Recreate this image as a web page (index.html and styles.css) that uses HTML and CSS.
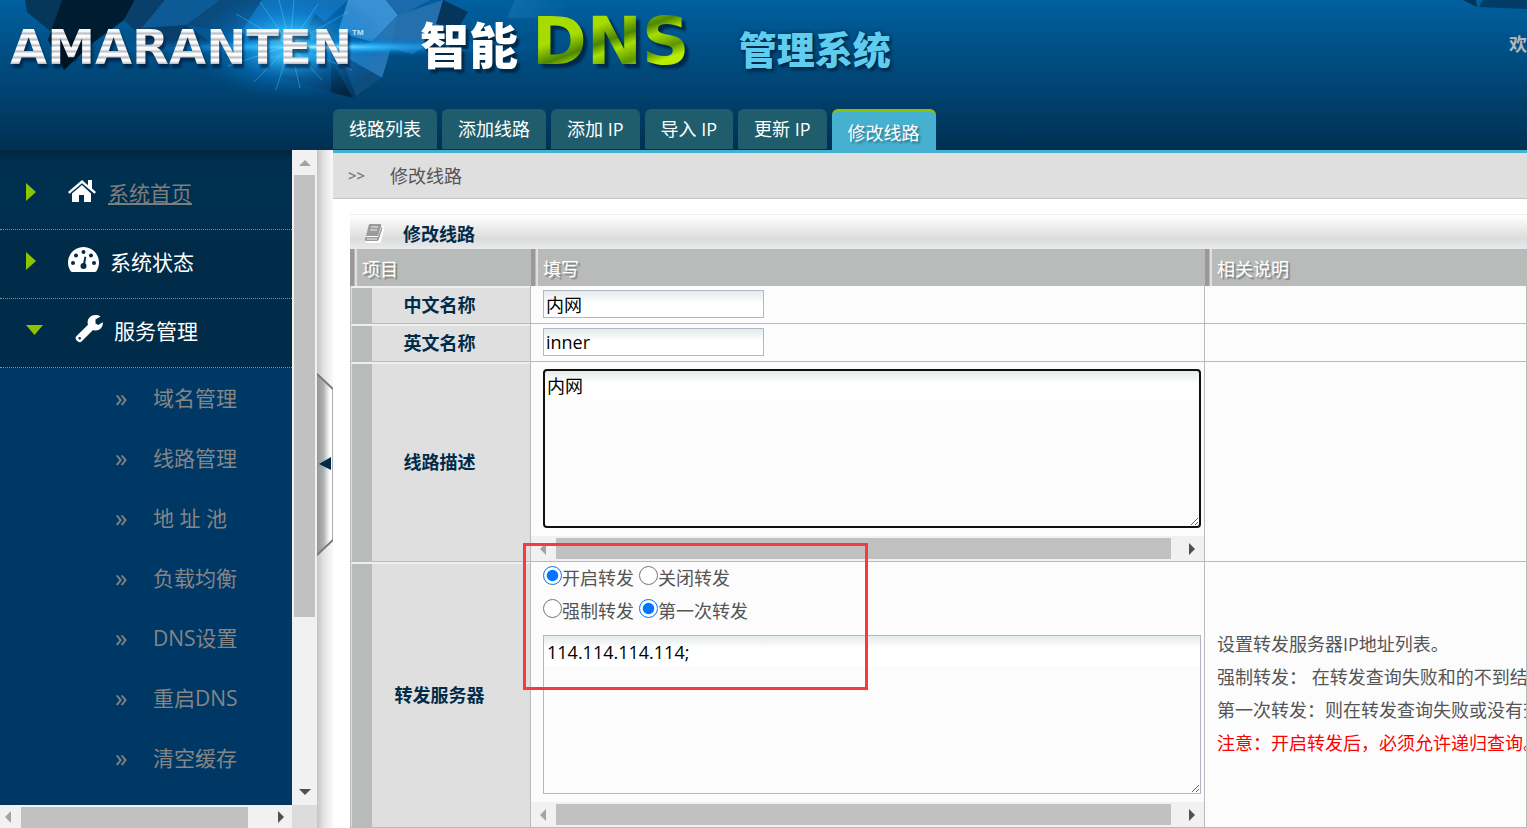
FILE: index.html
```
<!DOCTYPE html>
<html lang="zh-CN">
<head>
    <meta charset="UTF-8">
    <meta name="viewport" content="width=device-width, initial-scale=1.0">
    <title>智能DNS管理系统</title>
    <link rel="stylesheet" href="styles.css">
</head>
<body>
    <header>
        <svg class="crystal" width="580" height="100" viewBox="0 0 580 100" aria-hidden="true">
            <defs>
                <radialGradient id="glow">
                    <stop offset="0" stop-color="#b5f2ff"/>
                    <stop offset="0.25" stop-color="#2fbcfb" stop-opacity="0.9"/>
                    <stop offset="0.6" stop-color="#0a86e0" stop-opacity="0.4"/>
                    <stop offset="1" stop-color="#0060b0" stop-opacity="0"/>
                </radialGradient>
                <linearGradient id="fade" x1="0" x2="1" y1="0" y2="0">
                    <stop offset="0" stop-color="#2f8fd4"/>
                    <stop offset="1" stop-color="#2f8fd4" stop-opacity="0"/>
                </linearGradient>
            </defs>
            <polygon points="25,0 70,0 55,35 27,12" fill="#06365a"/>
            <polygon points="62,0 135,0 124,20 90,45 64,70 48,40" fill="#001c30"/>
            <polygon points="55,35 90,45 64,70" fill="#00131f"/>
            <polygon points="135,0 165,0 142,28 150,45 124,20" fill="#0a3f69"/>
            <polygon points="165,0 220,0 186,25 142,28" fill="#0d5b96"/>
            <polygon points="142,28 186,25 215,45 150,48" fill="#083e69"/>
            <polygon points="220,0 262,0 240,34 186,25" fill="#0a4a7c"/>
            <polygon points="262,0 348,0 315,30 290,45 240,34" fill="#1272b8"/>
            <polygon points="315,14 338,32 322,50 302,36" fill="#0b4672"/>
            <polygon points="348,0 386,0 398,15 372,42 338,32" fill="#3990d2"/>
            <polygon points="386,0 430,0 400,16" fill="#1a6bad"/>
            <polygon points="398,15 443,0 436,38 413,54 388,48" fill="#2470ae"/>
            <polygon points="398,15 388,58 382,78 340,54 372,42" fill="#2676b6"/>
            <polygon points="338,58 382,78 353,98 331,92 280,77 292,66" fill="#073a63"/>
            <polygon points="331,60 353,98 331,92" fill="#022743"/>
            <polygon points="340,54 382,78 356,96" fill="#0e4d7e"/>
            <polygon points="443,0 468,12 458,28 436,24" fill="#06345b"/>
            <polygon points="515,0 565,0 571,18 507,18" fill="url(#fade)" opacity="0.3"/>
            <ellipse cx="290" cy="45" rx="100" ry="56" fill="url(#glow)"/>
            <ellipse cx="320" cy="47" rx="230" ry="10" fill="url(#glow)"/>
            <g stroke="#8fe6ff" stroke-width="1" opacity="0.3">
                <path d="M290 45 279 0M290 45 294 0M290 45 260 2M290 45 318 4M290 45 236 14M290 45 348 12M290 45 276 90M290 45 300 88M290 45 254 82M290 45 322 80M290 45 228 66M290 45 352 70"/>
            </g>
        </svg>
        <div class="banner">
            <h1 class="brand">
                <span class="logo">AMARANTEN</span><sup class="tm">TM</sup>
                <span class="smart">智能</span>
                <span class="dns">DNS</span>
                <span class="system">管理系统</span>
            </h1>
            <svg class="shard" width="64" height="10" viewBox="0 0 64 10" aria-hidden="true">
                <path d="M0 0h13l1 7z" fill="#00335a"/>
                <path d="M20 0h44v9L16 7z" fill="#003c66"/>
            </svg>
            <strong class="welcome">欢</strong>
        </div>
        <nav class="tabs">
            <a href="#">线路列表</a>
            <a href="#">添加线路</a>
            <a href="#">添加 IP</a>
            <a href="#">导入 IP</a>
            <a href="#">更新 IP</a>
            <a href="#" class="active">修改线路</a>
        </nav>
    </header>
    <div class="page">
        <aside>
            <div class="side-view">
                <nav class="menu">
                    <a href="#" class="menu-item current">
                        <svg width="10" height="18" viewBox="0 0 10 18"><path d="M0 0l10 9-10 9z" fill="#8fc400"/></svg>
                        <svg class="icon home" width="28" height="24" viewBox="0 0 28 24"><path d="M14 6 4 14.500V23h7v-7h5v7h7v-8.500z"/><path d="M14 1 0 13l1.500 1.700L14 4.200l12.500 10.500L28 13l-4-3.500V1h-4v5.200z"/></svg>
                        <span>系统首页</span>
                    </a>
                    <a href="#" class="menu-item">
                        <svg width="10" height="18" viewBox="0 0 10 18"><path d="M0 0l10 9-10 9z" fill="#8fc400"/></svg>
                        <svg class="icon" width="31" height="26" viewBox="0 0 31 26">
                            <path d="M15.500 0C7 0 0 7 0 15.500c0 3 .8 5.800 2.300 8.300.4.700 1 1.200 1.700 1.200h23c.7 0 1.300-.5 1.700-1.200 1.500-2.500 2.300-5.300 2.300-8.300C31 7 24 0 15.500 0z"/>
                            <g fill="#002c4a"><circle cx="5" cy="16" r="2"/><circle cx="8" cy="8.500" r="2"/><circle cx="15.500" cy="5" r="2"/><circle cx="23" cy="8.500" r="2"/><circle cx="26" cy="16" r="2"/><circle cx="15.500" cy="19" r="3"/><path d="M16.500 9.500l1.700.5-1.200 8h-2.200z"/></g>
                        </svg>
                        <span>系统状态</span>
                    </a>
                    <a href="#" class="menu-item">
                        <svg width="17" height="10" viewBox="0 0 17 10"><path d="M0 0h17L8.500 10z" fill="#8fc400"/></svg>
                        <svg class="icon" width="28" height="28" viewBox="0 0 28 28"><path fill-rule="evenodd" d="M25.500 1.500 20.500 4.400v4l2.800 1.600 4.500-2.700c.6 4.500-3 8.200-7 8.200-1.100 0-2-.2-2.800-.6L6.500 26.500c-1 1-2.600 1-3.600 0l-1.600-1.600c-1-1-1-2.600 0-3.600L13 9.800c-.3-.8-.4-1.600-.4-2.400C12.600 3.400 16 0 20.300 0c1.900 0 3.700.4 5.200 1.500zM4.700 22a1.300 1.300 0 1 0 0 2.600 1.300 1.300 0 0 0 0-2.600z"/></svg>
                        <span>服务管理</span>
                    </a>
                </nav>
                <ul class="submenu">
                    <li><a href="#">域名管理</a></li>
                    <li><a href="#">线路管理</a></li>
                    <li><a href="#">地 址 池</a></li>
                    <li><a href="#">负载均衡</a></li>
                    <li><a href="#">DNS设置</a></li>
                    <li><a href="#">重启DNS</a></li>
                    <li><a href="#">清空缓存</a></li>
                </ul>
            </div>
            <div class="vbar"><i class="up"></i><b></b><i class="down"></i></div>
            <div class="hbar"><i class="left"></i><b></b><i class="right"></i></div>
            <div class="corner"></div>
        </aside>
        <div class="splitter">
            <button type="button" aria-label="收起菜单">
                <svg width="16" height="184" viewBox="0 0 16 184">
                    <defs>
                        <linearGradient id="grip" x1="0" x2="1" y1="0" y2="0">
                            <stop offset="0" stop-color="#94989a"/>
                            <stop offset="0.4" stop-color="#aeb0b1"/>
                            <stop offset="0.8" stop-color="#fff"/>
                        </linearGradient>
                    </defs>
                    <path d="M0 0l16 15v152L0 183z" fill="url(#grip)"/>
                    <path d="M15.500 15v152" stroke="#b0b0b0"/>
                    <path d="M0 1l16 15M0 182l16-15" stroke="#777" stroke-width="2"/>
                    <path d="M14 84v13L2 91z" fill="#002c4a"/>
                </svg>
            </button>
        </div>
        <main>
            <div class="crumb"><span>&gt;&gt;</span>修改线路</div>
            <form>
                <h2>
                    <svg width="20" height="20" viewBox="0 0 20 20"><path d="M6 1h12c1 0 2 1 1.500 2.500L16 16c-.3 1.500-1 2-2 2H2c-1.500 0-2-1.500-1.500-3z" fill="#fff" transform="translate(1 2)"/><path d="M6 1h10c1 0 1.500.8 1.200 2L14 13H2L4.500 3C4.800 1.800 5 1 6 1zM1.500 14H14l3.500-10 1 1-3.500 11c-.3 1.200-1 2-2 2H2c-1.500 0-1.500-2-.5-4z" fill="#9b9b9b"/><path d="M7 4h7M6 7h7M3 16h10" stroke="#eee"/></svg>
                    修改线路
                </h2>
                <table>
                    <colgroup>
                        <col class="col-name">
                        <col class="col-value">
                        <col>
                    </colgroup>
                    <thead>
                        <tr>
                            <th>项目</th>
                            <th>填写</th>
                            <th>相关说明</th>
                        </tr>
                    </thead>
                    <tbody>
                        <tr>
                            <th><label for="nameCn">中文名称</label></th>
                            <td><input type="text" id="nameCn" value="内网"></td>
                            <td></td>
                        </tr>
                        <tr>
                            <th><label for="nameEn">英文名称</label></th>
                            <td><input type="text" id="nameEn" value="inner"></td>
                            <td></td>
                        </tr>
                        <tr>
                            <th><label for="desc">线路描述</label></th>
                            <td class="scroll-cell">
                                <div class="field"><textarea id="desc" class="focused">内网</textarea></div>
                                <div class="hbar"><i class="left"></i><b></b><i class="right"></i></div>
                            </td>
                            <td></td>
                        </tr>
                        <tr>
                            <th><label for="servers">转发服务器</label></th>
                            <td class="scroll-cell">
                                <div class="radios">
                                    <label><input type="radio" name="forward" checked>开启转发</label>
                                    <label><input type="radio" name="forward">关闭转发</label>
                                </div>
                                <div class="radios">
                                    <label><input type="radio" name="mode">强制转发</label>
                                    <label><input type="radio" name="mode" checked>第一次转发</label>
                                </div>
                                <div class="field"><textarea id="servers">114.114.114.114;</textarea></div>
                                <div class="hbar"><i class="left"></i><b></b><i class="right"></i></div>
                                <div class="mark"></div>
                            </td>
                            <td class="note">
                                <p>设置转发服务器IP地址列表。</p>
                                <p>强制转发： 在转发查询失败和的不到结</p>
                                <p>第一次转发：则在转发查询失败或没有查</p>
                                <p class="warn">注意：开启转发后，必须允许递归查询。</p>
                            </td>
                        </tr>
                    </tbody>
                </table>
            </form>
        </main>
    </div>
</body>
</html>
```
FILE: styles.css
```
* {
    box-sizing: border-box;
}
body {
    font-family: "Open Sans", "Noto Sans CJK SC", sans-serif;
    font-size: 18px;
    margin: 0;
    height: 100vh;
    display: flex;
    flex-direction: column;
    overflow: hidden;
    background-color: #fff;
    color: #555;
}
a {
    color: inherit;
    text-decoration: none;
}
header {
    position: relative;
    z-index: 2;
    height: 150px;
    flex: none;
    display: flex;
    flex-direction: column;
    background: linear-gradient(#00609f, #004a7d 45%, #003052);
}
.crystal {
    position: absolute;
    top: 0;
    left: 0;
}
.banner {
    position: relative;
    height: 109px;
    flex: none;
    display: flex;
    align-items: flex-start;
}
.brand {
    display: flex;
    align-items: baseline;
    margin: 0;
    padding-left: 10px;
    line-height: 84px;
    white-space: nowrap;
}
.logo {
    font-family: "DejaVu Sans", sans-serif;
    font-size: 48px;
    font-weight: bold;
    color: transparent;
    background: repeating-linear-gradient(#fff 0, #f4f4f4 3px, #b4b8bd 4px, #e4e6e8 6px);
    -webkit-background-clip: text;
    background-clip: text;
    filter: drop-shadow(2px 4px 1px rgba(0, 20, 50, 0.6));
}
.tm {
    font-family: "Liberation Sans", sans-serif;
    font-size: 8px;
    line-height: 8px;
    align-self: flex-start;
    margin-top: 29px;
    width: 12px;
    color: #bfe4f5;
}
.smart {
    margin-left: 56px;
    font-size: 49px;
    font-weight: 900;
    color: #fff;
    text-shadow: 3px 4px 2px #00294a;
}
.dns {
    margin-left: 14px;
    font-family: "DejaVu Sans", sans-serif;
    font-size: 66px;
    font-weight: bold;
    color: transparent;
    background: linear-gradient(160deg, #a6dc00 35%, #4d8600 48%, #a8e000 56%, #5b9600 68%, #b8ec00 76%);
    -webkit-background-clip: text;
    background-clip: text;
    filter: drop-shadow(4px 4px 1px #00294a);
}
.system {
    margin-left: 49px;
    font-size: 38px;
    font-weight: 900;
    color: #5fcdf0;
    text-shadow: 0 0 4px #002a48, 2px 3px 3px #002a48;
}
.shard {
    position: absolute;
    top: 0;
    right: 0;
}
.welcome {
    margin-left: auto;
    line-height: 88px;
    color: #b8b8b8;
}
.tabs {
    position: relative;
    display: flex;
    align-items: flex-start;
    gap: 5px;
    padding-left: 333px;
}
.tabs a {
    height: 40px;
    line-height: 40px;
    padding: 0 16px;
    border-radius: 6px 6px 0 0;
    background-color: #1f5d6c;
    color: #fff;
    white-space: nowrap;
}
.tabs .active {
    height: 44px;
    line-height: 42px;
    border-top: 3px solid #8fbf00;
    background-color: #45b0cf;
    text-shadow: 2px 2px 2px rgba(0, 0, 0, 0.35);
}
.page {
    flex: 1;
    min-height: 0;
    display: flex;
}

/* left menu */
aside {
    width: 317px;
    flex: none;
    display: grid;
    grid-template-columns: 1fr 25px;
    grid-template-rows: 1fr 23px;
}
.side-view {
    overflow: hidden;
    background-color: #003865;
}
.menu {
    padding-top: 11px;
    background: linear-gradient(#002640, #003050 14px, #003050 60px, #002c4a 90px);
}
.menu-item {
    display: flex;
    align-items: center;
    height: 69px;
    padding: 0 0 6px 26px;
    border-bottom: 1px dotted #8b8f92;
    font-size: 21px;
    color: #fff;
}
.menu-item .icon {
    margin: 0 11px 2px 32px;
    fill: #fff;
}
.menu-item .home {
    margin-right: 12px;
}
.menu-item.current span {
    color: #7d7d7d;
    text-decoration: underline;
}
.submenu {
    list-style: none;
    margin: 0;
    padding: 0;
}
.submenu a {
    display: flex;
    align-items: center;
    height: 60px;
    padding: 0 0 2px 115px;
    font-size: 21px;
    color: #858585;
}
.submenu a::before {
    content: "»";
    width: 38px;
    font-size: 25px;
    line-height: 30px;
}

/* scroll bars */
.vbar, .hbar {
    display: flex;
    align-items: center;
    background-color: #f1f1f1;
}
.vbar {
    flex-direction: column;
    padding: 10px 0;
}
.vbar b {
    width: 21px;
    height: 442px;
    margin: 9px 0 auto;
    background-color: #c1c1c1;
}
.hbar {
    height: 23px;
    padding: 0 8px 0 5px;
}
.hbar b {
    width: 227px;
    height: 21px;
    margin: 2px auto 0 10px;
    background-color: #c1c1c1;
}
.vbar i, .hbar i {
    flex: none;
    border: 6px solid transparent;
}
.vbar .up {
    border-top-width: 0;
    border-bottom-color: #a3a3a3;
}
.vbar .down {
    border-bottom-width: 0;
    border-top-color: #505050;
}
.hbar .left {
    border-left-width: 0;
    border-right-color: #a3a3a3;
}
.hbar .right {
    border-right-width: 0;
    border-left-color: #505050;
}
.corner {
    background-color: #dcdcdc;
}
.splitter {
    width: 16px;
    flex: none;
    display: flex;
    align-items: flex-start;
    background: linear-gradient(90deg, #c4c4c4, #e2e2e2 40%, #fafafa);
}
.splitter button {
    margin: 223px 0 0;
    padding: 0;
    border: none;
    background: none;
    cursor: pointer;
    line-height: 0;
}

/* edit form */
main {
    flex: 1;
    min-width: 0;
    overflow: hidden;
    border-top: 3px solid #45b0cf;
}
.crumb {
    display: flex;
    align-items: center;
    height: 46px;
    padding: 0 0 2px 15px;
    background-color: #dfdfdf;
    border-bottom: 1px solid #c4c4c4;
}
.crumb span {
    width: 42px;
    font-size: 15px;
    font-weight: 600;
    color: #777;
}
form {
    padding: 15px 0 0 17px;
}
h2 {
    display: flex;
    align-items: center;
    gap: 19px;
    height: 35px;
    margin: 0;
    padding: 2px 0 0 14px;
    border-top: 1px solid #eee;
    background: linear-gradient(#fff, #dcdcdc 70%, #e9eaed);
    font-size: 18px;
    color: #002c4a;
}
table {
    width: 100%;
    table-layout: fixed;
    border-collapse: separate;
    border-spacing: 0;
}
.col-name {
    width: 181px;
}
.col-value {
    width: 674px;
}
thead th {
    height: 37px;
    padding: 0 0 0 12px;
    text-align: left;
    font-weight: normal;
    color: #fff;
    text-shadow: 2px 2px 1px #808080;
    background: linear-gradient(90deg, #999 4px, #b9bbba 4px, #b9bbba 5px, #dfdfdf 5px, #dfdfdf 7px, #b9bbba 7px);
}
tbody th {
    padding: 0 2px 2px 0;
    border: solid #b9bbba;
    border-width: 0 1px 1px;
    background: linear-gradient(90deg, #dfdfdf 1px, #b9bbba 1px, #b9bbba 21px, #dfdfdf 21px);
    box-shadow: inset 0 2px #eee;
    color: #002c4a;
}
td {
    height: 38px;
    padding: 0 3px 2px 12px;
    border: solid #b9bbba;
    border-width: 0 1px 1px 0;
    background-color: #fcfcfc;
}
input[type="text"], textarea {
    display: block;
    margin: 0;
    border: 1px solid #b3b5c8;
    background: linear-gradient(#e4eaea, #fff 12px, #fff 30px, #fcfcfc 30px);
    font-family: inherit;
    font-size: 18px;
    color: #000;
}
input[type="text"] {
    width: 221px;
    height: 28px;
    padding: 0 2px;
}
textarea {
    width: 100%;
    height: 159px;
    padding: 4px 3px;
    line-height: 25px;
}
textarea.focused {
    border: 2px solid #101010;
    border-radius: 4px;
    padding: 3px 2px;
}
td.scroll-cell {
    position: relative;
    padding: 0;
}
.field {
    padding: 7px 3px 8px 12px;
}
.scroll-cell .hbar {
    height: 25px;
    padding: 0 9px;
}
.scroll-cell .hbar b {
    width: 615px;
    margin-top: 0;
}
.radios {
    display: flex;
    gap: 5px;
    height: 33px;
    padding-left: 12px;
    line-height: 33px;
}
.radios label {
    display: flex;
}
.radios input {
    width: 19px;
    height: 19px;
    margin: 4px 0 0;
}
.note {
    overflow: hidden;
}
.note p {
    margin: 0;
    line-height: 33px;
    white-space: nowrap;
}
.note .warn {
    color: #f00;
}
/* highlight frame over the forwarding options */
.mark {
    position: absolute;
    top: -19px;
    left: -8px;
    width: 345px;
    height: 147px;
    border: 3px solid #f93a3a;
}
```
